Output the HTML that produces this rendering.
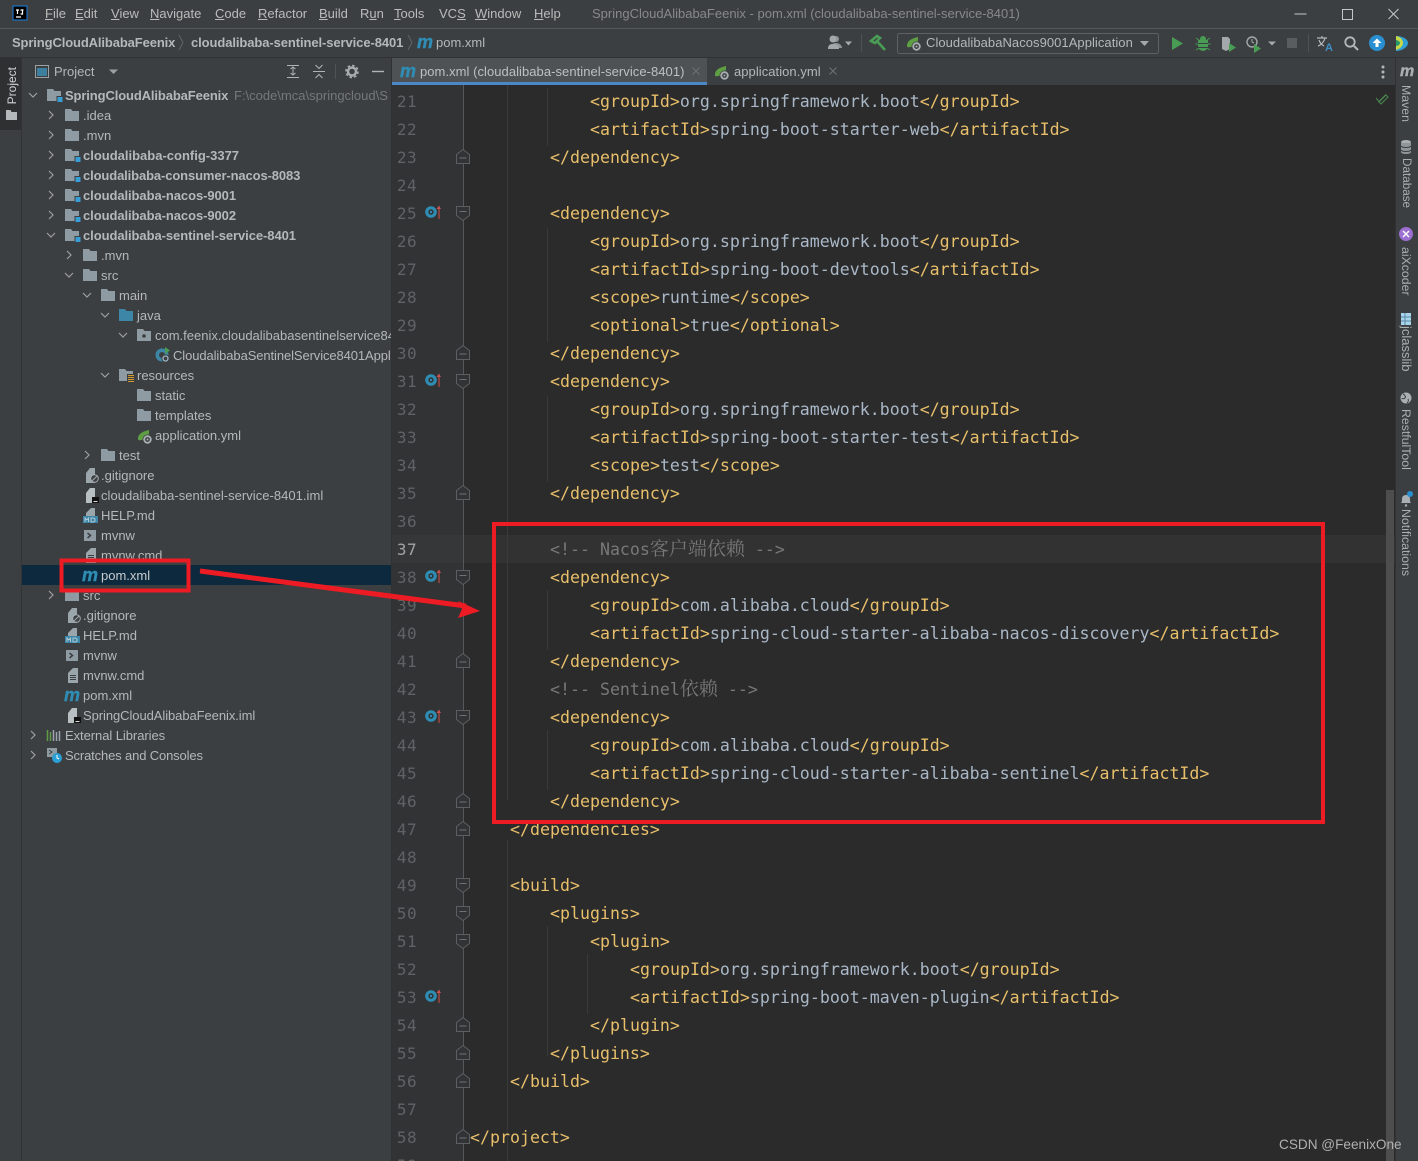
<!DOCTYPE html>
<html lang="en"><head><meta charset="utf-8"><title>pom.xml</title>
<style>
html,body{margin:0;padding:0;background:#3c3f41}
#p{position:relative;width:1418px;height:1161px;overflow:hidden;background:#3c3f41;font-family:"Liberation Sans","Noto Sans CJK SC",sans-serif;font-size:13px;color:#bbbbbb}
.b{position:absolute}
.t{position:absolute;white-space:nowrap;line-height:20px;height:20px}
#tree .t{font-size:13px;color:#b4b8bb}
#tree b{font-weight:bold;color:#b4b8bb;letter-spacing:-.07px}
.m{font:italic bold 18px "Liberation Sans",sans-serif;color:#2f8db3;-webkit-text-stroke:.4px currentColor}
#tree .t.m{font:italic bold 18px "Liberation Sans",sans-serif;color:#2f8db3}
.menu{font-size:13px;color:#bbbbbb;top:4px}
.n{position:absolute;left:392px;width:25px;text-align:right;font:16px/28px "DejaVu Sans Mono","Liberation Mono",monospace;color:#606366;letter-spacing:.4px;transform:translateY(1px)}
.c{position:absolute;white-space:pre;font:16.6px/28px "DejaVu Sans Mono","Liberation Mono",monospace;color:#e8bf6a;transform:translateY(1px)}
.c i{font-style:normal;color:#a9b7c6}
.c.k{color:#787878}
.c s{text-decoration:none;font-family:"Noto Serif CJK SC","Noto Sans CJK SC",serif;font-size:19px;line-height:20px}
.v{position:absolute;writing-mode:vertical-rl;white-space:nowrap;font-size:12.3px;line-height:14px;color:#a9afb3;left:1399px}
</style></head><body><div id="p">

<!-- backgrounds -->
<div class="b" style="left:0;top:28px;width:1418px;height:1px;background:#555759"></div>
<div class="b" style="left:0;top:57px;width:1418px;height:1px;background:#2f3132"></div>
<div class="b" style="left:0;top:58px;width:22px;height:1103px;background:#3c3f41"></div>
<div class="b" style="left:0;top:58px;width:22px;height:72px;background:#2e3032"></div>
<div class="b" style="left:21px;top:58px;width:1px;height:1103px;background:#313335"></div>
<div class="b" style="left:22px;top:565px;width:369px;height:20px;background:#0d293e"></div>
<div class="b" style="left:391px;top:58px;width:1px;height:1103px;background:#2f3132"></div>
<div class="b" style="left:392px;top:58px;width:1004px;height:26px;background:#3c3f41"></div>
<div class="b" style="left:392px;top:58px;width:315px;height:24px;background:#4e5254"></div>
<div class="b" style="left:392px;top:82px;width:315px;height:3px;background:#4a88c7"></div>
<div class="b" style="left:392px;top:85px;width:1004px;height:1076px;background:#2b2b2b"></div>
<div class="b" style="left:392px;top:85px;width:71px;height:1076px;background:#313335"></div>
<div class="b" style="left:392px;top:535px;width:71px;height:28px;background:#353739"></div>
<div class="b" style="left:463px;top:535px;width:933px;height:28px;background:#323232"></div>
<div class="b" style="left:1386px;top:490px;width:8px;height:671px;background:#4d4d4d"></div>
<div class="b" style="left:1395px;top:58px;width:1px;height:1103px;background:#323232"></div>

<!-- icon layer -->
<svg class="b" style="left:0;top:0" width="1418" height="1161" viewBox="0 0 1418 1161">
<defs>
<symbol id="fo" viewBox="0 0 14 12" width="14" height="12"><path d="M0 0h6l1.500 2H14v10H0z" fill="#8f9ba3"/></symbol>
<symbol id="mo" viewBox="0 0 16 13" width="16" height="13"><path d="M0 0h6l1.500 2H14v10H0z" fill="#8f9ba3"/><rect x="9.500" y="7" width="6" height="6" fill="#3c3f41"/><rect x="10.500" y="8" width="5" height="5" fill="#389fd6"/></symbol>
<symbol id="dn" viewBox="0 0 10 10" width="10" height="10"><path d="M1 3l4 4 4-4" fill="none" stroke="#9da0a2" stroke-width="1.200"/></symbol>
<symbol id="rt" viewBox="0 0 10 10" width="10" height="10"><path d="M3 1l4 4-4 4" fill="none" stroke="#9da0a2" stroke-width="1.200"/></symbol>
<symbol id="txt" viewBox="0 0 12 15" width="12" height="15"><path d="M1 5l5-5h5v15H1z" fill="#9aa5ac"/><path d="M3 7.500h6M3 9.500h6M3 11.500h6" stroke="#3c3f41"/></symbol>
<symbol id="md" viewBox="0 0 15 15" width="15" height="15"><path d="M3 5l5-5h4v8H3z" fill="#9aa5ac"/><rect y="8" width="15" height="7" fill="#3d86a8"/><path d="M2 14v-4l1.700 2 1.700-2v4M8 10v4h2.500l1.500-1v-2l-1.500-1z" fill="none" stroke="#cfd8dc" stroke-width=".8"/></symbol>
<symbol id="sh" viewBox="0 0 12 12" width="12" height="12"><rect width="12" height="11" fill="#8f9ba3"/><path d="M3.500 3l3 2.500-3 2.500" fill="none" stroke="#3c3f41" stroke-width="1.500"/></symbol>
<symbol id="ig" viewBox="0 0 14 15" width="14" height="15"><path d="M1 5l4-5h5v15H1z" fill="#9aa5ac"/><circle cx="9.500" cy="10.500" r="3.800" fill="#3c3f41" stroke="#a4adb3" stroke-width="1"/><path d="M7 13l5-5" stroke="#a4adb3"/></symbol>
<symbol id="iml" viewBox="0 0 14 15" width="14" height="15"><path d="M1 5l4-5h5v15H1z" fill="#b8bfc3"/><rect x="7" y="9" width="7" height="6" fill="#111"/><rect x="8.500" y="13" width="4" height="1" fill="#ddd"/></symbol>
<symbol id="mav" viewBox="0 0 16 16" width="16" height="16"><circle cx="6" cy="8" r="5.800" fill="#2f8db3"/><circle cx="6" cy="8" r="2.700" fill="#313335"/><circle cx="6" cy="8" r="1.200" fill="#2f8db3"/><path d="M14 15V3" stroke="#b04a46" stroke-width="1.300"/><path d="M11.500 5L14 1.500 16 5z" fill="#c75450"/></symbol>
<symbol id="fs" viewBox="0 0 14 16" width="14" height="16"><path d="M.5 1.500h13v9l-6.500 5-6.500-5z" fill="#313335" stroke="#5c5f61"/><path d="M3.500 6.500h7" stroke="#6e7173"/></symbol>
<symbol id="fe" viewBox="0 0 14 16" width="14" height="16"><path d="M.5 14.500h13v-9l-6.500-5-6.500 5z" fill="#313335" stroke="#5c5f61"/><path d="M3.500 9h7" stroke="#6e7173"/></symbol>
<symbol id="sp" viewBox="0 0 16 16" width="16" height="16"><path d="M1 10C1 4.500 6 2.500 12 1c.5 6-2 10-7 10-2 0-4 1-4-1z" fill="#5f9f44"/><circle cx="10.500" cy="10.500" r="5" fill="#3c3f41"/><circle cx="10.500" cy="10.500" r="3.300" fill="none" stroke="#a9b0b4" stroke-width="1.800"/><circle cx="10.500" cy="10.500" r="1" fill="#a9b0b4"/></symbol>
</defs>

<!-- title bar -->
<rect x="13" y="6" width="14" height="14" fill="#000" stroke="#1a7fe0" stroke-width="1"/>
<path d="M16 10h3M17.500 10v4M20.500 10h3M22.500 10v4h-2M16 17h5" stroke="#fff" stroke-width="1.200" fill="none"/>
<path d="M1294.500 14h12M1342.500 9.500h10v10h-10zM1388.500 9l10 10M1398.500 9l-10 10" stroke="#c4c7c9" stroke-width="1" fill="none"/>

<!-- breadcrumbs -->
<path d="M179 35l4 7.500-4 7.500M408 35l4 7.500-4 7.500" stroke="#606366" fill="none"/>

<!-- toolbar -->
<circle cx="836" cy="39" r="3" fill="#8f9497"/><path d="M831 48c0-3 2-5 5-5s6 2 6 5z" fill="#8f9497"/>
<circle cx="833" cy="39" r="3.500" fill="#a3a8ab"/><path d="M828 49c0-4 2-5 5-5s6 1 6 5z" fill="#a3a8ab"/><path d="M845 41.500h7l-3.500 4z" fill="#a3a8ab"/>
<path d="M861.500 34v18M1308.500 34v18" stroke="#4e5254"/>
<path d="M871 41l6-5 3 2-5 5zM877 41l8 9" stroke="#499c54" stroke-width="2.600" fill="none"/>
<rect x="897.500" y="33.500" width="261" height="20" rx="2" fill="none" stroke="#5e6163"/>
<use href="#sp" x="906" y="36"/>
<path d="M1140 41h9l-4.500 5z" fill="#a3a8ab"/>
<path d="M1172 37l11 6.500-11 6.500z" fill="#499c54"/>
<path d="M1198 40h10v6a5 5 0 0 1-10 0z" fill="#499c54"/><circle cx="1203" cy="39" r="3" fill="#499c54"/><path d="M1196 38l3 2M1210 38l-3 2M1195.500 44h3M1207.500 44h3M1196 50l3-2M1210 50l-3-2" stroke="#499c54" fill="none"/><path d="M1198 43.500h10M1198 47.500h10" stroke="#3c3f41"/>
<path d="M1222 37h6l2 2v10l-4 2-4-2z" fill="#a3a8ab"/><path d="M1229 43l7 4.500-7 4.500z" fill="#499c54"/>
<circle cx="1252" cy="42" r="5" fill="none" stroke="#a3a8ab" stroke-width="1.400"/><path d="M1252 39v3l2 1" stroke="#a3a8ab" fill="none"/><path d="M1254 44l7 4.500-7 4.500z" fill="#499c54"/>
<path d="M1268 41.500h8l-4 4z" fill="#a3a8ab"/>
<rect x="1287" y="38" width="10" height="10" fill="#5a5d5f"/>
<path d="M1317 38h10M1322 36v2M1325 38c-1 4-4 7-7 8M1319 40c1 3 3 5 5 6" stroke="#b4b8bb" stroke-width="1.200" fill="none"/>
<text x="1325" y="51" font-family="Liberation Sans" font-size="11" font-weight="bold" fill="#3d8fc4">A</text>
<circle cx="1350" cy="42" r="4.700" fill="none" stroke="#b4b8bb" stroke-width="1.800"/><path d="M1354 46l4 4" stroke="#b4b8bb" stroke-width="2"/>
<circle cx="1377" cy="43" r="8" fill="#2a8fd0"/><path d="M1372.500 43l4.500-4.500 4.500 4.500h-3v4h-3v-4z" fill="#fff"/>
<path d="M1396 36c6 0 12 3 12 7s-6 8-12 8z" fill="#2ea0d6"/><path d="M1396 36c5 1 7 4 7 7s-3 6-7 7z" fill="#c7d84a"/><path d="M1396 40c3 .5 4 2 4 3s-1 3-4 3z" fill="#2b9a6b"/>

<!-- left stripe / tool header -->
<path d="M6 110h4.500l1 2H17v8H6z" fill="#b4b8bb"/>
<rect x="35.500" y="65.500" width="13" height="12" fill="none" stroke="#9aa0a3"/><rect x="37" y="68" width="10" height="8" fill="#3d7f9e"/>
<path d="M109 69.500h9l-4.500 4.500z" fill="#9da0a2"/>
<path d="M287 65.500h12M287 77.500h12M293 67v8M290.500 69l2.500-2 2.500 2M290.500 73l2.500 2 2.500-2" stroke="#b0b4b7" fill="none"/>
<path d="M313 71.500h12M315.500 65l3.500 3.500 3.500-3.500M315.500 78l3.500-3.500 3.500 3.500" stroke="#b0b4b7" fill="none"/>
<path d="M335.500 64v15" stroke="#505356"/>
<circle cx="352" cy="71.500" r="4" fill="none" stroke="#a9adb0" stroke-width="2.400"/><circle cx="352" cy="71.500" r="6" fill="none" stroke="#a9adb0" stroke-width="1.600" stroke-dasharray="2.500 2.200"/>
<path d="M372 71.500h12" stroke="#b0b4b7" stroke-width="1.400"/>

<!-- tree chevrons -->
<use href="#dn" x="28" y="90"/><use href="#rt" x="46" y="110"/><use href="#rt" x="46" y="130"/><use href="#rt" x="46" y="150"/><use href="#rt" x="46" y="170"/><use href="#rt" x="46" y="190"/><use href="#rt" x="46" y="210"/><use href="#dn" x="46" y="230"/><use href="#rt" x="64" y="250"/><use href="#dn" x="64" y="270"/><use href="#dn" x="82" y="290"/><use href="#dn" x="100" y="310"/><use href="#dn" x="118" y="330"/><use href="#dn" x="100" y="370"/><use href="#rt" x="82" y="450"/><use href="#rt" x="46" y="590"/><use href="#rt" x="28" y="730"/><use href="#rt" x="28" y="750"/>

<!-- tree icons -->
<use href="#mo" x="47" y="89"/><use href="#fo" x="65" y="109"/><use href="#fo" x="65" y="129"/><use href="#mo" x="65" y="149"/><use href="#mo" x="65" y="169"/><use href="#mo" x="65" y="189"/><use href="#mo" x="65" y="209"/><use href="#mo" x="65" y="229"/>
<use href="#fo" x="83" y="249"/><use href="#fo" x="83" y="269"/><use href="#fo" x="101" y="289"/>
<path d="M119 309h6l1.500 2h6.500v10h-14z" fill="#3d86a8"/>
<path d="M137 329h6l1.500 2h6.500v10h-14z" fill="#8f9ba3"/><circle cx="144" cy="336" r="1.800" fill="#3c3f41"/>
<circle cx="162" cy="355" r="6.500" fill="#3d86a8"/><circle cx="162" cy="355" r="3" fill="#3c3f41"/><path d="M165 347v7l5-3.500z" fill="#499c54"/><circle cx="165.500" cy="358.500" r="4" fill="#3c3f41"/><circle cx="165.500" cy="358.500" r="2.500" fill="none" stroke="#9fb6c2" stroke-width="1.300"/>
<path d="M119 369h6l1.500 2h6.500v10h-14z" fill="#8f9ba3"/><rect x="127" y="374" width="8" height="9" fill="#3c3f41"/><path d="M128 375.500h6M128 377.500h6M128 379.500h6M128 381.500h6" stroke="#d39a2c" stroke-width=".9"/>
<use href="#fo" x="137" y="389"/><use href="#fo" x="137" y="409"/>
<use href="#sp" x="137" y="429"/>
<use href="#fo" x="101" y="449"/>
<use href="#ig" x="85" y="468"/><use href="#iml" x="85" y="488"/><use href="#md" x="83" y="508"/><use href="#sh" x="84" y="530"/><use href="#txt" x="85" y="548"/>
<use href="#fo" x="65" y="589"/>
<use href="#ig" x="67" y="608"/><use href="#md" x="65" y="628"/><use href="#sh" x="66" y="650"/><use href="#txt" x="67" y="668"/>
<use href="#iml" x="67" y="708"/>
<path d="M47.500 730v11M50.500 732v9" stroke="#5e9c45" stroke-width="1.500"/><path d="M53.500 730v11M56.500 732v9M59.500 731v10" stroke="#9aa5ac" stroke-width="1.500"/>
<rect x="47" y="748" width="10" height="9" fill="#8f9ba3"/><path d="M49 750l3 2-3 2" stroke="#3c3f41" fill="none"/><circle cx="57" cy="758" r="5" fill="#2a9fd6"/><path d="M57 755v3l2 1" stroke="#fff" fill="none"/>

<!-- tabs -->
<path d="M692.500 67.500l7 7M699.500 67.500l-7 7M829.500 67.500l7 7M836.500 67.500l-7 7" stroke="#6f7274"/>
<use href="#sp" x="714" y="65"/>
<circle cx="1383" cy="67" r="1.500" fill="#b4b8bb"/><circle cx="1383" cy="72" r="1.500" fill="#b4b8bb"/><circle cx="1383" cy="77" r="1.500" fill="#b4b8bb"/>
<path d="M1376 98l3 3.500 7-7M1379 102l7-7 2 2-7 7z" fill="none" stroke="#4a8a4f"/>

<!-- gutter -->
<path d="M463.500 85V1161" stroke="#555759"/>
<path d="M507.500 85V800M507.500 840V1161" stroke="#3a3a3a"/>
<path d="M547.500 88v58M547.500 228v114M547.500 396v86M547.500 590v60M547.500 730v60M547.500 926v130M587.500 954v60" stroke="#3a3a3a"/>
<use href="#fe" x="456" y="149"/><use href="#fs" x="456" y="205"/><use href="#fe" x="456" y="345"/><use href="#fs" x="456" y="373"/><use href="#fe" x="456" y="485"/><use href="#fs" x="456" y="569"/><use href="#fe" x="456" y="653"/><use href="#fs" x="456" y="709"/><use href="#fe" x="456" y="793"/><use href="#fe" x="456" y="821"/><use href="#fs" x="456" y="877"/><use href="#fs" x="456" y="905"/><use href="#fs" x="456" y="933"/><use href="#fe" x="456" y="1017"/><use href="#fe" x="456" y="1045"/><use href="#fe" x="456" y="1073"/><use href="#fe" x="456" y="1129"/>
<use href="#mav" x="425" y="204"/><use href="#mav" x="425" y="372"/><use href="#mav" x="425" y="568"/><use href="#mav" x="425" y="708"/><use href="#mav" x="425" y="988"/>

<!-- right stripe icons -->
<ellipse cx="1406" cy="142" rx="5" ry="2" fill="#a9afb3"/><path d="M1401 143v9c0 1 2 2 5 2s5-1 5-2v-9" fill="#8f969a"/><path d="M1401 146c1 2 9 2 10 0M1401 150c1 2 9 2 10 0" stroke="#3c3f41" fill="none"/>
<circle cx="1406" cy="234" r="7" fill="#9c6fd0"/><path d="M1403 231l6 6M1409 231l-6 6" stroke="#fff" stroke-width="1.400"/>
<rect x="1401" y="313" width="10" height="12" fill="#a8d4ec"/><path d="M1401 317h10M1401 321h10M1405 313v12" stroke="#5a8aa8"/>
<circle cx="1406" cy="398" r="5.500" fill="#a9afb3"/><path d="M1403 394c2 1 3 3 2 4s-3 1-3 0M1408 399c1 2 0 3-1 4" stroke="#3c3f41" fill="none"/>
<path d="M1401 503c1-1 1-2 1-4 0-3 2-4 4-4s4 1 4 4c0 2 0 3 1 4z" fill="#a9afb3"/><circle cx="1410" cy="494" r="3" fill="#2a8fd0"/><circle cx="1406" cy="505.500" r="1.200" fill="#a9afb3"/>
</svg>

<!-- title text -->
<div class="t menu" style="left:45px"><u>F</u>ile</div>
<div class="t menu" style="left:75px"><u>E</u>dit</div>
<div class="t menu" style="left:111px"><u>V</u>iew</div>
<div class="t menu" style="left:150px"><u>N</u>avigate</div>
<div class="t menu" style="left:215px"><u>C</u>ode</div>
<div class="t menu" style="left:258px"><u>R</u>efactor</div>
<div class="t menu" style="left:319px"><u>B</u>uild</div>
<div class="t menu" style="left:360px">R<u>u</u>n</div>
<div class="t menu" style="left:394px"><u>T</u>ools</div>
<div class="t menu" style="left:439px">VC<u>S</u></div>
<div class="t menu" style="left:475px"><u>W</u>indow</div>
<div class="t menu" style="left:534px"><u>H</u>elp</div>
<div class="t" style="left:592px;top:4px;color:#87898b">SpringCloudAlibabaFeenix - pom.xml (cloudalibaba-sentinel-service-8401)</div>

<!-- nav -->
<div class="t" style="left:12px;top:33px;font-weight:bold;color:#b4b8bb;letter-spacing:-.12px">SpringCloudAlibabaFeenix</div>
<div class="t" style="left:191px;top:33px;font-weight:bold;color:#b4b8bb;letter-spacing:-.09px">cloudalibaba-sentinel-service-8401</div>
<div class="t m" style="left:417px;top:32px">m</div>
<div class="t" style="left:436px;top:33px;color:#b4b8bb">pom.xml</div>
<div class="t" style="left:926px;top:33px;color:#b4b8bb;letter-spacing:.05px">CloudalibabaNacos9001Application</div>

<!-- left stripe -->
<div class="v" style="left:5px;top:67px;transform:rotate(180deg);color:#d0d3d5;font-size:12px">Project</div>
<div class="t" style="left:54px;top:62px;color:#b4b8bb">Project</div>

<!-- tree -->
<div id="tree" class="b" style="left:0;top:1px;width:391px;height:1160px;overflow:hidden">
<div class="t" style="left:65px;top:85px"><b style="letter-spacing:-.12px">SpringCloudAlibabaFeenix</b></div>
<div class="t" style="left:234px;top:85px;color:#75787a">F:\code\mca\springcloud\S</div>
<div class="t" style="left:83px;top:105px">.idea</div>
<div class="t" style="left:83px;top:125px">.mvn</div>
<div class="t" style="left:83px;top:145px"><b style="letter-spacing:0">cloudalibaba-config-3377</b></div>
<div class="t" style="left:83px;top:165px"><b style="letter-spacing:-.12px">cloudalibaba-consumer-nacos-8083</b></div>
<div class="t" style="left:83px;top:185px"><b>cloudalibaba-nacos-9001</b></div>
<div class="t" style="left:83px;top:205px"><b>cloudalibaba-nacos-9002</b></div>
<div class="t" style="left:83px;top:225px"><b>cloudalibaba-sentinel-service-8401</b></div>
<div class="t" style="left:101px;top:245px">.mvn</div>
<div class="t" style="left:101px;top:265px">src</div>
<div class="t" style="left:119px;top:285px">main</div>
<div class="t" style="left:137px;top:305px">java</div>
<div class="t" style="left:155px;top:325px">com.feenix.cloudalibabasentinelservice8401</div>
<div class="t" style="left:173px;top:345px;letter-spacing:-.1px">CloudalibabaSentinelService8401Application</div>
<div class="t" style="left:137px;top:365px">resources</div>
<div class="t" style="left:155px;top:385px">static</div>
<div class="t" style="left:155px;top:405px">templates</div>
<div class="t" style="left:155px;top:425px">application.yml</div>
<div class="t" style="left:119px;top:445px">test</div>
<div class="t" style="left:101px;top:465px">.gitignore</div>
<div class="t" style="left:101px;top:485px;letter-spacing:.03px">cloudalibaba-sentinel-service-8401.iml</div>
<div class="t" style="left:101px;top:505px">HELP.md</div>
<div class="t" style="left:101px;top:525px">mvnw</div>
<div class="t" style="left:101px;top:545px">mvnw.cmd</div>
<div class="t m" style="left:82px;top:564px">m</div>
<div class="t" style="left:101px;top:565px;color:#c8ccce">pom.xml</div>
<div class="t" style="left:83px;top:585px">src</div>
<div class="t" style="left:83px;top:605px">.gitignore</div>
<div class="t" style="left:83px;top:625px">HELP.md</div>
<div class="t" style="left:83px;top:645px">mvnw</div>
<div class="t" style="left:83px;top:665px">mvnw.cmd</div>
<div class="t m" style="left:64px;top:684px">m</div>
<div class="t" style="left:83px;top:685px">pom.xml</div>
<div class="t" style="left:83px;top:705px;letter-spacing:-.07px">SpringCloudAlibabaFeenix.iml</div>
<div class="t" style="left:65px;top:725px;letter-spacing:-.06px">External Libraries</div>
<div class="t" style="left:65px;top:745px;letter-spacing:-.14px">Scratches and Consoles</div>
</div>

<!-- tabs -->
<div class="t m" style="left:400px;top:61px">m</div>
<div class="t" style="left:420px;top:62px;color:#bdc0c2;letter-spacing:.05px">pom.xml (cloudalibaba-sentinel-service-8401)</div>
<div class="t" style="left:734px;top:62px;color:#b4b8bb;letter-spacing:.05px">application.yml</div>

<!-- right stripe -->
<div class="t m" style="left:1400px;top:63px;color:#a9afb3;font-size:16px">m</div>
<div class="v" style="top:85px">Maven</div>
<div class="v" style="top:158px;font-size:11.7px">Database</div>
<div class="v" style="top:247px">aiXcoder</div>
<div class="v" style="top:326px;font-size:13px">jclasslib</div>
<div class="v" style="top:409px">RestfulTool</div>
<div class="v" style="top:509px">Notifications</div>

<!-- line numbers -->
<div class="n" style="top:87px">21</div><div class="n" style="top:115px">22</div><div class="n" style="top:143px">23</div><div class="n" style="top:171px">24</div><div class="n" style="top:199px">25</div><div class="n" style="top:227px">26</div><div class="n" style="top:255px">27</div><div class="n" style="top:283px">28</div><div class="n" style="top:311px">29</div><div class="n" style="top:339px">30</div><div class="n" style="top:367px">31</div><div class="n" style="top:395px">32</div><div class="n" style="top:423px">33</div><div class="n" style="top:451px">34</div><div class="n" style="top:479px">35</div><div class="n" style="top:507px">36</div><div class="n" style="top:535px;color:#a4a3a3">37</div><div class="n" style="top:563px">38</div><div class="n" style="top:591px">39</div><div class="n" style="top:619px">40</div><div class="n" style="top:647px">41</div><div class="n" style="top:675px">42</div><div class="n" style="top:703px">43</div><div class="n" style="top:731px">44</div><div class="n" style="top:759px">45</div><div class="n" style="top:787px">46</div><div class="n" style="top:815px">47</div><div class="n" style="top:843px">48</div><div class="n" style="top:871px">49</div><div class="n" style="top:899px">50</div><div class="n" style="top:927px">51</div><div class="n" style="top:955px">52</div><div class="n" style="top:983px">53</div><div class="n" style="top:1011px">54</div><div class="n" style="top:1039px">55</div><div class="n" style="top:1067px">56</div><div class="n" style="top:1095px">57</div><div class="n" style="top:1123px">58</div><div class="n" style="top:1151px">59</div>

<!-- code -->
<div class="c" style="left:590px;top:87px">&lt;groupId&gt;<i>org.springframework.boot</i>&lt;/groupId&gt;</div>
<div class="c" style="left:590px;top:115px">&lt;artifactId&gt;<i>spring-boot-starter-web</i>&lt;/artifactId&gt;</div>
<div class="c" style="left:550px;top:143px">&lt;/dependency&gt;</div>
<div class="c" style="left:550px;top:199px">&lt;dependency&gt;</div>
<div class="c" style="left:590px;top:227px">&lt;groupId&gt;<i>org.springframework.boot</i>&lt;/groupId&gt;</div>
<div class="c" style="left:590px;top:255px">&lt;artifactId&gt;<i>spring-boot-devtools</i>&lt;/artifactId&gt;</div>
<div class="c" style="left:590px;top:283px">&lt;scope&gt;<i>runtime</i>&lt;/scope&gt;</div>
<div class="c" style="left:590px;top:311px">&lt;optional&gt;<i>true</i>&lt;/optional&gt;</div>
<div class="c" style="left:550px;top:339px">&lt;/dependency&gt;</div>
<div class="c" style="left:550px;top:367px">&lt;dependency&gt;</div>
<div class="c" style="left:590px;top:395px">&lt;groupId&gt;<i>org.springframework.boot</i>&lt;/groupId&gt;</div>
<div class="c" style="left:590px;top:423px">&lt;artifactId&gt;<i>spring-boot-starter-test</i>&lt;/artifactId&gt;</div>
<div class="c" style="left:590px;top:451px">&lt;scope&gt;<i>test</i>&lt;/scope&gt;</div>
<div class="c" style="left:550px;top:479px">&lt;/dependency&gt;</div>
<div class="c k" style="left:550px;top:535px">&lt;!-- Nacos<s>客户端依赖</s> --&gt;</div>
<div class="c" style="left:550px;top:563px">&lt;dependency&gt;</div>
<div class="c" style="left:590px;top:591px">&lt;groupId&gt;<i>com.alibaba.cloud</i>&lt;/groupId&gt;</div>
<div class="c" style="left:590px;top:619px">&lt;artifactId&gt;<i>spring-cloud-starter-alibaba-nacos-discovery</i>&lt;/artifactId&gt;</div>
<div class="c" style="left:550px;top:647px">&lt;/dependency&gt;</div>
<div class="c k" style="left:550px;top:675px">&lt;!-- Sentinel<s>依赖</s> --&gt;</div>
<div class="c" style="left:550px;top:703px">&lt;dependency&gt;</div>
<div class="c" style="left:590px;top:731px">&lt;groupId&gt;<i>com.alibaba.cloud</i>&lt;/groupId&gt;</div>
<div class="c" style="left:590px;top:759px">&lt;artifactId&gt;<i>spring-cloud-starter-alibaba-sentinel</i>&lt;/artifactId&gt;</div>
<div class="c" style="left:550px;top:787px">&lt;/dependency&gt;</div>
<div class="c" style="left:510px;top:815px">&lt;/dependencies&gt;</div>
<div class="c" style="left:510px;top:871px">&lt;build&gt;</div>
<div class="c" style="left:550px;top:899px">&lt;plugins&gt;</div>
<div class="c" style="left:590px;top:927px">&lt;plugin&gt;</div>
<div class="c" style="left:630px;top:955px">&lt;groupId&gt;<i>org.springframework.boot</i>&lt;/groupId&gt;</div>
<div class="c" style="left:630px;top:983px">&lt;artifactId&gt;<i>spring-boot-maven-plugin</i>&lt;/artifactId&gt;</div>
<div class="c" style="left:590px;top:1011px">&lt;/plugin&gt;</div>
<div class="c" style="left:550px;top:1039px">&lt;/plugins&gt;</div>
<div class="c" style="left:510px;top:1067px">&lt;/build&gt;</div>
<div class="c" style="left:470px;top:1123px">&lt;/project&gt;</div>

<!-- watermark -->
<div class="t" style="left:1279px;top:1135px;font-size:13.6px;color:#b0b0b0">CSDN @FeenixOne</div>

<!-- annotations -->
<svg class="b" style="left:0;top:0" width="1418" height="1161" viewBox="0 0 1418 1161">
<rect x="494" y="524" width="829" height="298" fill="none" stroke="#ed1c24" stroke-width="4"/>
<rect x="61.500" y="560.500" width="127" height="30" fill="none" stroke="#ed1c24" stroke-width="4"/>
<path d="M200 571L466 606" stroke="#ed1c24" stroke-width="5" fill="none"/>
<path d="M480 611L458 601 462 609 458 618z" fill="#ed1c24"/>
</svg>
</div></body></html>
